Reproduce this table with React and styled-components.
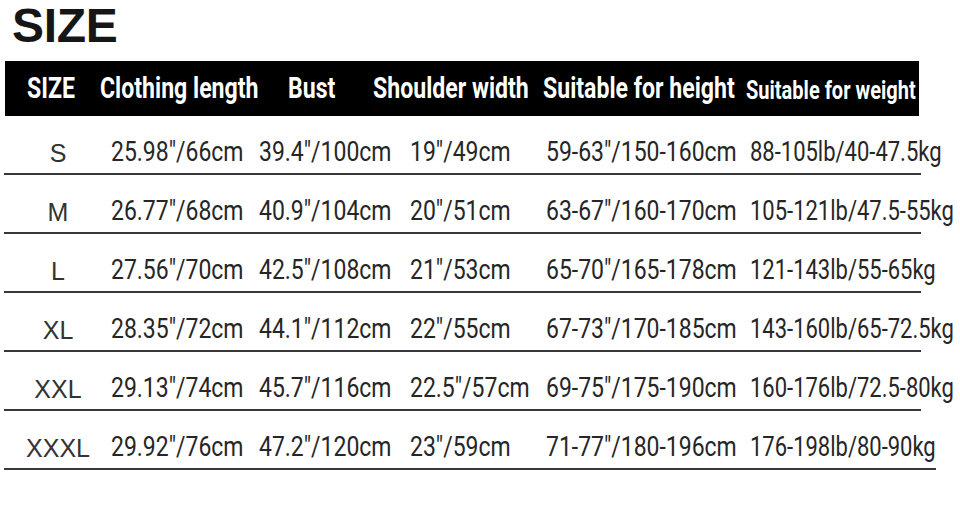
import React from "react";
import styled, { createGlobalStyle } from "styled-components";

const GlobalStyle = createGlobalStyle`
  html, body {
    margin: 0;
    padding: 0;
    background: #ffffff;
  }
  body {
    width: 960px;
    height: 520px;
    overflow: hidden;
  }
`;

// column grid shared by the header and the rows
const COLUMNS = "91px 155px 115px 173px 202px 181px";

const Page = styled.div`
  padding-top: 2px;
`;

const Title = styled.h1`
  margin: 0 0 11px 12px;
  font-family: "Liberation Sans", Arial, sans-serif;
  font-weight: 700;
  font-size: 48px;
  line-height: 1;
  letter-spacing: -0.3px;
  color: #161616;
`;

const Table = styled.div`
  margin-left: 4px;
  width: 917px;
`;

const HeaderBar = styled.div`
  display: grid;
  grid-template-columns: ${COLUMNS};
  align-items: end;
  height: 55px;
  margin: 0 2px 0 1px;
  padding-bottom: 13px;
  box-sizing: border-box;
  background: #000000;
`;

// the reference uses a condensed face; squeeze a regular one
const Squeeze = styled.span`
  display: inline-block;
  transform: scaleX(${(p) => p.$x});
  transform-origin: left center;
`;

const HeadCell = styled.div`
  padding-left: ${(p) => p.$pad}px;
  font-family: Roboto, "Liberation Sans", sans-serif;
  font-weight: 700;
  font-size: ${(p) => (p.$small ? 26 : 30)}px;
  line-height: 1;
  color: #ffffff;
  white-space: nowrap;
`;

const Row = styled.div`
  display: grid;
  grid-template-columns: ${COLUMNS};
  align-items: end;
  height: 59px;
  padding-bottom: 7px;
  box-sizing: border-box;
  border-bottom: 2px solid #383838;
  width: ${(p) => (p.$last ? 932 : 917)}px;
`;

const SizeCell = styled.div`
  padding-left: 17px;
  text-align: center;
  font-family: "Liberation Sans", Arial, sans-serif;
  font-size: 25px;
  line-height: 1;
  color: #333333;
  white-space: nowrap;
`;

const Cell = styled.div`
  padding-left: ${(p) => p.$pad}px;
  font-family: Roboto, "Liberation Sans", sans-serif;
  font-size: 28px;
  line-height: 1;
  color: #262626;
  white-space: nowrap;
`;

const headers = [
  { label: "SIZE", pad: 22 },
  { label: "Clothing length", pad: 4 },
  { label: "Bust", pad: 37 },
  { label: "Shoulder width", pad: 7 },
  { label: "Suitable for height", pad: 4 },
  { label: "Suitable for weight", pad: 5, small: true },
];

const cellPads = [16, 9, 45, 8, 10];
const cellScales = [0.82, 0.82, 0.82, 0.82, 0.785];

const rows = [
  ["S", '25.98"/66cm', '39.4"/100cm', '19"/49cm', '59-63"/150-160cm', "88-105lb/40-47.5kg"],
  ["M", '26.77"/68cm', '40.9"/104cm', '20"/51cm', '63-67"/160-170cm', "105-121lb/47.5-55kg"],
  ["L", '27.56"/70cm', '42.5"/108cm', '21"/53cm', '65-70"/165-178cm', "121-143lb/55-65kg"],
  ["XL", '28.35"/72cm', '44.1"/112cm', '22"/55cm', '67-73"/170-185cm', "143-160lb/65-72.5kg"],
  ["XXL", '29.13"/74cm', '45.7"/116cm', '22.5"/57cm', '69-75"/175-190cm', "160-176lb/72.5-80kg"],
  ["XXXL", '29.92"/76cm', '47.2"/120cm', '23"/59cm', '71-77"/180-196cm', "176-198lb/80-90kg"],
];

export default function App() {
  return (
    <>
      <GlobalStyle />
      <Page>
        <Title>SIZE</Title>
        <Table>
          <HeaderBar>
            {headers.map((h) => (
              <HeadCell key={h.label} $pad={h.pad} $small={h.small}>
                <Squeeze $x={0.77}>{h.label}</Squeeze>
              </HeadCell>
            ))}
          </HeaderBar>
          {rows.map(([size, ...values], i) => (
            <Row key={size} $last={i === rows.length - 1}>
              <SizeCell>{size}</SizeCell>
              {values.map((v, j) => (
                <Cell key={j} $pad={cellPads[j]}>
                  <Squeeze $x={cellScales[j]}>{v}</Squeeze>
                </Cell>
              ))}
            </Row>
          ))}
        </Table>
      </Page>
    </>
  );
}
